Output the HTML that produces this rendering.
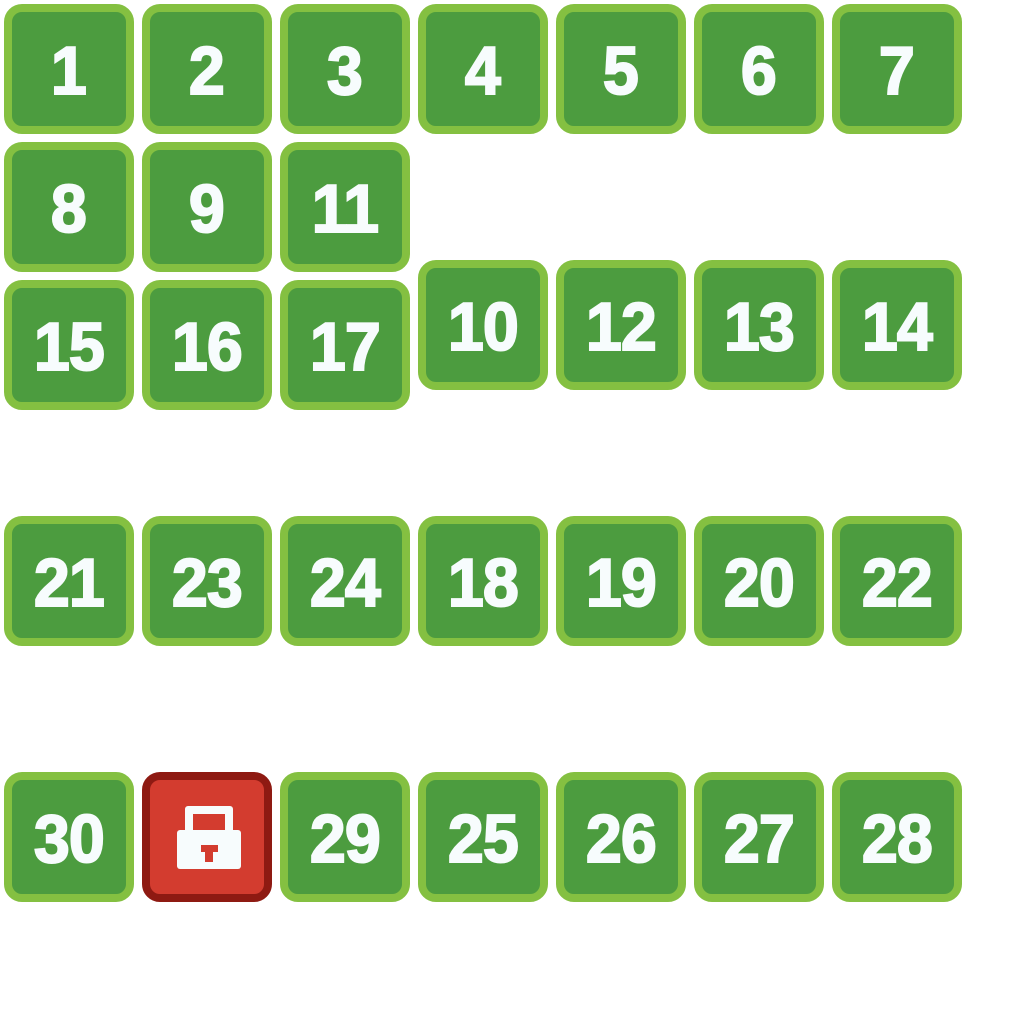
<!DOCTYPE html>
<html><head><style>
html,body{margin:0;padding:0;background:#fff;width:1024px;height:1024px;overflow:hidden}
.t{position:absolute;width:114px;height:114px;border:8px solid #84c041;border-radius:18px;background:#4c9c3f;
display:flex;align-items:center;justify-content:center;color:#f7fcfd;
font-family:"Liberation Sans",sans-serif;font-weight:bold;font-size:68px;line-height:68px;letter-spacing:-1px;
-webkit-text-stroke:2px #f7fcfd}
.t span{margin-left:-1px;position:relative;top:2px;display:inline-block;transform:scaleX(0.95)}
.r{background:#d33c2f;border-color:#8e1a12}
</style></head><body>
<div class="t" style="left:4px;top:4px"><span>1</span></div>
<div class="t" style="left:142px;top:4px"><span>2</span></div>
<div class="t" style="left:280px;top:4px"><span>3</span></div>
<div class="t" style="left:418px;top:4px"><span>4</span></div>
<div class="t" style="left:556px;top:4px"><span>5</span></div>
<div class="t" style="left:694px;top:4px"><span>6</span></div>
<div class="t" style="left:832px;top:4px"><span>7</span></div>
<div class="t" style="left:4px;top:142px"><span>8</span></div>
<div class="t" style="left:142px;top:142px"><span>9</span></div>
<div class="t" style="left:280px;top:142px"><span>11</span></div>
<div class="t" style="left:4px;top:280px"><span>15</span></div>
<div class="t" style="left:142px;top:280px"><span>16</span></div>
<div class="t" style="left:280px;top:280px"><span>17</span></div>
<div class="t" style="left:418px;top:260px"><span>10</span></div>
<div class="t" style="left:556px;top:260px"><span>12</span></div>
<div class="t" style="left:694px;top:260px"><span>13</span></div>
<div class="t" style="left:832px;top:260px"><span>14</span></div>
<div class="t" style="left:4px;top:516px"><span>21</span></div>
<div class="t" style="left:142px;top:516px"><span>23</span></div>
<div class="t" style="left:280px;top:516px"><span>24</span></div>
<div class="t" style="left:418px;top:516px"><span>18</span></div>
<div class="t" style="left:556px;top:516px"><span>19</span></div>
<div class="t" style="left:694px;top:516px"><span>20</span></div>
<div class="t" style="left:832px;top:516px"><span>22</span></div>
<div class="t" style="left:4px;top:772px"><span>30</span></div>
<div class="t r" style="left:142px;top:772px"></div>
<svg style="position:absolute;left:142px;top:769px" width="130" height="130">
<path fill="#f7fcfd" fill-rule="evenodd" d="M46 37h42a3 3 0 0 1 3 3v21h-8v-16h-32v16h-8v-21a3 3 0 0 1 3-3z"/>
<rect x="35" y="61" width="64" height="39" rx="3" fill="#f7fcfd"/>
<path fill="#d33c2f" d="M59 76h17v7h-5v10h-8v-10h-4z"/>
</svg>
<div class="t" style="left:280px;top:772px"><span>29</span></div>
<div class="t" style="left:418px;top:772px"><span>25</span></div>
<div class="t" style="left:556px;top:772px"><span>26</span></div>
<div class="t" style="left:694px;top:772px"><span>27</span></div>
<div class="t" style="left:832px;top:772px"><span>28</span></div>
</body></html>
